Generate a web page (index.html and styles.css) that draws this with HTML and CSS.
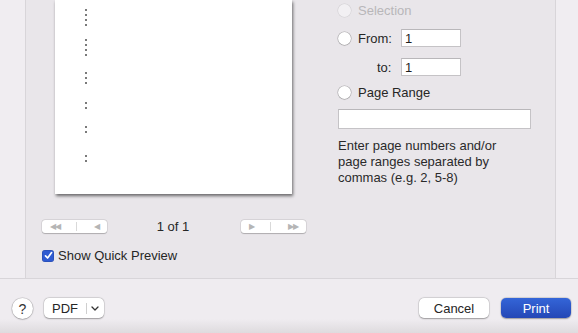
FILE: index.html
```html
<!DOCTYPE html>
<html>

<head>
    <meta charset="utf-8">
    <meta name="viewport" content="width=device-width, initial-scale=1.0">
    <title>Print</title>
    <link rel="stylesheet" href="styles.css">
</head>

<body>
    <div class="window">
        <div class="top">
            <div class="side side-left"></div>
            <div class="panel">
                <div class="preview">
                    <div class="paper">
                        <div class="dots">
                            <div class="group"><i></i><i></i><i></i><i></i></div>
                            <div class="group"><i></i><i></i><i></i><i></i></div>
                            <div class="group"><i></i><i></i><i></i></div>
                            <div class="group"><i></i><i></i></div>
                            <div class="group"><i></i><i></i></div>
                            <div class="group"><i></i><i></i></div>
                        </div>
                    </div>
                    <div class="pager">
                        <div class="seg">
                            <span class="arrow">&#9664;&#9664;</span>
                            <span class="sep"></span>
                            <span class="arrow">&#9664;</span>
                        </div>
                        <span class="count">1 of 1</span>
                        <div class="seg">
                            <span class="arrow">&#9654;</span>
                            <span class="sep"></span>
                            <span class="arrow">&#9654;&#9654;</span>
                        </div>
                    </div>
                    <label class="check">
                        <span class="box">
                            <svg width="9" height="9" viewBox="0 0 9 9"><path d="M1.5 4.8 L3.6 7 L7.6 1.6" fill="none" stroke="#fff" stroke-width="1.7" stroke-linecap="round" stroke-linejoin="round"/></svg>
                        </span>
                        Show Quick Preview
                    </label>
                </div>

                <div class="options">
                    <div class="row row-sel disabled">
                        <span class="radio"></span>Selection
                    </div>
                    <div class="row row-from">
                        <span class="radio"></span><span class="lbl">From:</span>
                        <input class="field small" value="1">
                    </div>
                    <div class="row row-to">
                        <span class="lbl to">to:</span>
                        <input class="field small" value="1">
                    </div>
                    <div class="row row-range">
                        <span class="radio"></span>Page Range
                    </div>
                    <input class="field wide">
                    <p class="help">Enter page numbers and/or page ranges separated by commas (e.g. 2, 5-8)</p>
                </div>
            </div>
            <div class="side side-right"></div>
        </div>

        <div class="footer">
            <button class="help-btn">?</button>
            <div class="pdf">
                <span class="pdf-label">PDF</span>
                <span class="pdf-sep"></span>
                <svg width="8" height="5" viewBox="0 0 8 5"><path d="M1 1 L4 4 L7 1" fill="none" stroke="#333" stroke-width="1.3" stroke-linecap="round" stroke-linejoin="round"/></svg>
            </div>
            <div class="spacer"></div>
            <button class="btn">Cancel</button>
            <button class="btn primary">Print</button>
        </div>
    </div>
</body>

</html>
```

FILE: styles.css
```css
html, body {
    font-family: "Liberation Sans", Arial, sans-serif;
    font-size: 13px;
    color: #262626;
}

body {
    margin: 0;
    padding: 0;
    background: #efecf0;
}

.window {
    display: flex;
    flex-direction: column;
    width: 578px;
    height: 333px;
    overflow: hidden;
}

.top {
    display: flex;
    height: 278px;
    border-bottom: 1px solid #d8d5d9;
}

.side {
    background: #f0edf1;
}

.side-left {
    width: 25px;
    border-right: 1px solid #d8d5d9;
}

.side-right {
    flex: 1;
    border-left: 1px solid #d8d5d9;
}

.panel {
    width: 529px;
    background: #e9e6ea;
    display: grid;
    grid-template-columns: 312px 1fr;
}

/* preview column */
.preview {
    display: flex;
    flex-direction: column;
}

.paper {
    margin-left: 29px;
    width: 237px;
    height: 194px;
    background: #fff;
    box-shadow: 1px 2px 3px rgba(0, 0, 0, 0.55);
}

.dots {
    display: flex;
    flex-direction: column;
    gap: 13px;
    padding: 9px 0 0 30px;
}

.dots .group {
    display: flex;
    flex-direction: column;
    gap: 3px;
}

.dots i {
    display: block;
    width: 2px;
    height: 2px;
    background: #7a7a7a;
}

.dots .group:nth-child(3) { margin-top: 3px; }
.dots .group:nth-child(4) { margin-top: 5px; }
.dots .group:nth-child(5) { margin-top: 4px; }
.dots .group:nth-child(6) { margin-top: 9px; }

.pager {
    display: flex;
    align-items: center;
    justify-content: space-between;
    width: 264px;
    margin: 25px 0 0 16px;
}

.seg {
    display: flex;
    align-items: center;
    justify-content: space-around;
    width: 65px;
    height: 13px;
    background: #fff;
    border-radius: 3px;
    box-shadow: 0 0 0 0.5px rgba(0, 0, 0, 0.12), 0 0.5px 1px rgba(0, 0, 0, 0.2);
}

.arrow {
    font-size: 8px;
    line-height: 8px;
    color: #b5b5b5;
    letter-spacing: -1px;
}

.sep {
    width: 1px;
    height: 9px;
    background: #d9d9d9;
}

.count {
    font-size: 13px;
    margin-right: 2px;
}

.check {
    display: flex;
    align-items: center;
    gap: 4px;
    margin: 14px 0 0 16px;
}

.box {
    display: flex;
    align-items: center;
    justify-content: center;
    width: 12px;
    height: 12px;
    border-radius: 3px;
    background: #2f5ad1;
    box-shadow: inset 0 0 0 0.5px rgba(0, 0, 0, 0.2);
}

/* options column */
.options {
    padding-top: 3px;
}

.row {
    display: flex;
    align-items: center;
    height: 14px;
}

.radio {
    width: 13px;
    height: 13px;
    border-radius: 50%;
    background: #fff;
    box-shadow: 0 0 0 0.5px rgba(0, 0, 0, 0.25), 0 0.5px 1px rgba(0, 0, 0, 0.2);
    margin-right: 7px;
}

.disabled {
    color: #b8b6b9;
}

.disabled .radio {
    background: #f2f0f3;
    box-shadow: 0 0 0 0.5px rgba(0, 0, 0, 0.1);
}

.row-from {
    margin-top: 12px;
    height: 18px;
}

.row-to {
    margin-top: 11px;
    height: 18px;
}

.row-range {
    margin-top: 9px;
}

.lbl {
    width: 43px;
}

.lbl.to {
    width: 24px;
    margin-left: 39px;
}

.field {
    box-sizing: border-box;
    font-family: "Liberation Sans", Arial, sans-serif;
    font-size: 13px;
    color: #1f1f1f;
    border: 1px solid #c5c3c6;
    border-top-color: #b9b7ba;
    background: #fff;
    padding: 0 3px;
    outline: none;
}

.small {
    width: 60px;
    height: 18px;
}

.wide {
    display: block;
    width: 193px;
    height: 20px;
    margin-top: 10px;
}

.help {
    margin: 9px 0 0;
    width: 190px;
    line-height: 16px;
    color: #2a2a2a;
}

/* footer */
.footer {
    flex: 1;
    display: flex;
    align-items: flex-start;
    padding: 19px 7px 0 12px;
    background: linear-gradient(to bottom, #efecf0 0, #efecf0 40px, #dedbde 54px);
}

.help-btn {
    width: 21px;
    height: 21px;
    border: none;
    border-radius: 50%;
    background: #fff;
    box-shadow: 0 0 0 0.5px rgba(0, 0, 0, 0.15), 0 0.5px 1.5px rgba(0, 0, 0, 0.3);
    font-family: "Liberation Sans", Arial, sans-serif;
    font-size: 14px;
    color: #333;
    padding: 0;
}

.pdf {
    display: flex;
    align-items: center;
    height: 20px;
    width: 60px;
    margin-left: 11px;
    background: #fff;
    border-radius: 5px;
    box-shadow: 0 0 0 0.5px rgba(0, 0, 0, 0.12), 0 0.5px 1.5px rgba(0, 0, 0, 0.3);
}

.pdf-label {
    width: 42px;
    text-align: center;
}

.pdf-sep {
    width: 1px;
    height: 11px;
    background: #cfcfcf;
    margin-right: 4px;
}

.spacer {
    flex: 1;
}

.btn {
    width: 70px;
    height: 20px;
    border: none;
    border-radius: 5px;
    background: #fff;
    box-shadow: 0 0 0 0.5px rgba(0, 0, 0, 0.12), 0 0.5px 1.5px rgba(0, 0, 0, 0.3);
    font-family: "Liberation Sans", Arial, sans-serif;
    font-size: 13px;
    color: #262626;
    padding: 0;
}

.btn.primary {
    margin-left: 12px;
    background: linear-gradient(to bottom, #3465d8, #2447b6);
    color: #fff;
}
```
